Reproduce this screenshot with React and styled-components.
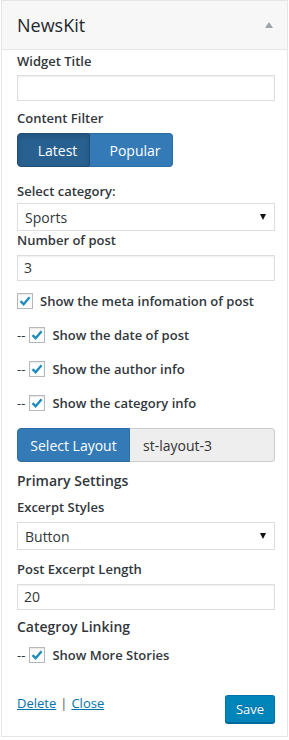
import React from 'react'
import styled, { createGlobalStyle } from 'styled-components'

const GlobalStyle = createGlobalStyle`
  body {
    margin: 0;
    background: #fff;
    font-family: "Open Sans", "Liberation Sans", sans-serif;
    color: #32373c;
  }
`

const Widget = styled.div`
  box-sizing: border-box;
  width: 287px;
  margin-left: 1px;
  border: 1px solid #e5e5e5;
  background: #fff;
`
const Header = styled.div`
  display: flex;
  align-items: center;
  justify-content: space-between;
  height: 48px;
  padding: 0 14px 0 15px;
  background: #f7f7f7;
  border-bottom: 1px solid #e5e5e5;
`
const Title = styled.h3`
  margin: 0;
  font-size: 18px;
  font-weight: 400;
  color: #23282d;
`
const Toggle = styled.span`
  width: 0;
  height: 0;
  border-left: 4px solid transparent;
  border-right: 4px solid transparent;
  border-bottom: 6px solid #a0a5aa;
  margin-top: -1px;
`
const Body = styled.div`
  padding: 2px 12px 13px 15px;
`
const Label = styled.div`
  margin-top: ${p => p.$top || 0}px;
  font-size: ${p => (p.$big ? 14 : 13)}px;
  font-weight: 600;
  line-height: 18px;
  color: #32373c;
`
const TextInput = styled.div`
  box-sizing: border-box;
  margin-top: ${p => p.$top || 0}px;
  height: 26px;
  border: 1px solid #ddd;
  box-shadow: inset 0 1px 2px rgba(0, 0, 0, 0.07);
  padding: 0 6px;
  font-size: 14px;
  line-height: 24px;
  color: #32373c;
`
const Select = styled.div`
  box-sizing: border-box;
  display: flex;
  align-items: center;
  justify-content: space-between;
  margin-top: ${p => p.$top || 0}px;
  height: 28px;
  border: 1px solid #ddd;
  padding: 0 8px 0 7px;
  font-size: 14px;
  color: #32373c;
  &::after {
    content: '';
    border-left: 3px solid transparent;
    border-right: 3px solid transparent;
    border-top: 6px solid #111;
  }
`
const ButtonGroup = styled.div`
  display: flex;
  width: fit-content;
  margin-top: ${p => p.$top || 0}px;
`
const FilterButton = styled.div`
  box-sizing: border-box;
  height: 34px;
  width: ${p => p.$width}px;
  display: flex;
  align-items: center;
  justify-content: center;
  padding-left: 8px;
  font-size: 14px;
  color: #fff;
  background: ${p => (p.$active ? '#286090' : '#337ab7')};
  border: 1px solid ${p => (p.$active ? '#204d74' : '#2e6da4')};
  box-shadow: ${p => (p.$active ? 'inset 0 3px 5px rgba(0,0,0,0.125)' : 'none')};
  &:first-child {
    border-radius: 4px 0 0 4px;
  }
  &:last-child {
    border-radius: 0 4px 4px 0;
    border-left: none;
  }
`
const CheckRow = styled.div`
  display: flex;
  align-items: center;
  margin-top: ${p => p.$top || 0}px;
  height: 18px;
  font-size: 13px;
  font-weight: 600;
  color: #32373c;
`
const Dash = styled.span`
  font-weight: 400;
  margin-right: 4px;
`
const Box = styled.span`
  box-sizing: border-box;
  width: 16px;
  height: 16px;
  margin-right: 7px;
  border: 1px solid #b4b9be;
  background: #fff;
  box-shadow: inset 0 1px 2px rgba(0, 0, 0, 0.1);
  display: flex;
  align-items: center;
  justify-content: center;
`
const LayoutGroup = styled.div`
  display: flex;
  margin-top: ${p => p.$top || 0}px;
  height: 34px;
`
const LayoutButton = styled.div`
  box-sizing: border-box;
  width: 113px;
  display: flex;
  align-items: center;
  justify-content: center;
  background: #337ab7;
  border: 1px solid #2e6da4;
  border-radius: 4px 0 0 4px;
  color: #fff;
  font-size: 14px;
`
const LayoutValue = styled.div`
  box-sizing: border-box;
  flex: 1;
  display: flex;
  align-items: center;
  padding-left: 13px;
  background: #eee;
  border: 1px solid #ccc;
  border-left: none;
  border-radius: 0 4px 4px 0;
  color: #333;
  font-size: 14px;
`
const Footer = styled.div`
  display: flex;
  align-items: flex-start;
  justify-content: space-between;
  margin-top: 31px;
`
const Links = styled.div`
  font-size: 13px;
  line-height: 18px;
  color: #32373c;
  margin-top: -1px;
`
const Link = styled.a`
  color: #0073aa;
  text-decoration: underline;
  cursor: pointer;
`
const Sep = styled.span`
  color: #555;
  margin: 0 4px;
`
const Save = styled.button`
  box-sizing: border-box;
  width: 50px;
  height: 28px;
  padding: 0;
  font-family: inherit;
  font-size: 13px;
  color: #fff;
  background: #0085ba;
  border: 1px solid #0073aa;
  border-bottom-color: #006799;
  border-radius: 3px;
  box-shadow: 0 1px 0 #006799;
  text-shadow: 0 -1px 1px #006799;
`

function Check({ dash, top, children }) {
  return (
    <CheckRow $top={top}>
      {dash && <Dash>--</Dash>}
      <Box>
        <svg width="12" height="12" viewBox="0 0 12 12">
          <path d="M1.5 6.2 L4.6 9.2 L10.6 2.2" fill="none" stroke="#1e8cbe" strokeWidth="2.4" />
        </svg>
      </Box>
      {children}
    </CheckRow>
  )
}

export default function App() {
  return (
    <>
      <GlobalStyle />
      <Widget>
        <Header>
          <Title>NewsKit</Title>
          <Toggle />
        </Header>
        <Body>
          <Label>Widget Title</Label>
          <TextInput $top={5} />
          <Label $top={8}>Content Filter</Label>
          <ButtonGroup $top={6}>
            <FilterButton $active $width={73}>Latest</FilterButton>
            <FilterButton $width={83}>Popular</FilterButton>
          </ButtonGroup>
          <Label $top={15}>Select category:</Label>
          <Select $top={3}>Sports</Select>
          <Label>Number of post</Label>
          <TextInput $top={6}>3</TextInput>
          <Check top={11}>Show the meta infomation of post</Check>
          <Check dash top={16}>Show the date of post</Check>
          <Check dash top={16}>Show the author info</Check>
          <Check dash top={16}>Show the category info</Check>
          <LayoutGroup $top={16}>
            <LayoutButton>Select Layout</LayoutButton>
            <LayoutValue>st-layout-3</LayoutValue>
          </LayoutGroup>
          <Label $big $top={10}>Primary Settings</Label>
          <Label $top={8}>Excerpt Styles</Label>
          <Select $top={6}>Button</Select>
          <Label $top={10}>Post Excerpt Length</Label>
          <TextInput $top={6}>20</TextInput>
          <Label $big $top={8}>Categroy Linking</Label>
          <Check dash top={10}>Show More Stories</Check>
          <Footer>
            <Links>
              <Link>Delete</Link>
              <Sep>|</Sep>
              <Link>Close</Link>
            </Links>
            <Save>Save</Save>
          </Footer>
        </Body>
      </Widget>
    </>
  )
}
